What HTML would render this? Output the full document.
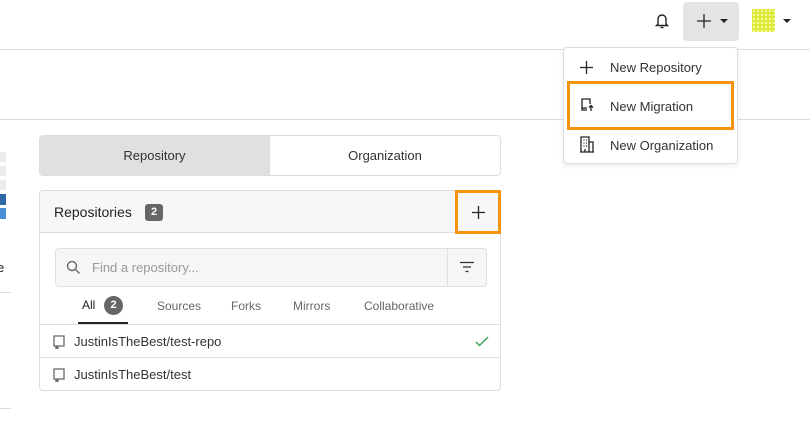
<!DOCTYPE html>
<html><head><style>
*{box-sizing:border-box;margin:0;padding:0}
body{width:810px;height:430px;background:#fff;font-family:"Liberation Sans",sans-serif;font-size:13px;color:#222;position:relative;overflow:hidden}
.a{position:absolute}
</style></head><body>
<div class="a" style="left:0;top:49px;width:810px;height:1px;background:#ddd"></div>
<div class="a" style="left:0;top:119px;width:810px;height:1px;background:#ddd"></div>
<div class="a" style="left:0;top:152px;width:6px;height:10px;background:#ebebeb"></div>
<div class="a" style="left:0;top:166px;width:6px;height:10px;background:#ebebeb"></div>
<div class="a" style="left:0;top:180px;width:6px;height:10px;background:#ebebeb"></div>
<div class="a" style="left:0;top:194px;width:6px;height:11px;background:#2f6aa8"></div>
<div class="a" style="left:0;top:208px;width:6px;height:11px;background:#4a8fd6"></div>
<div class="a" style="left:-3px;top:260px;font-size:13px">e</div>
<div class="a" style="left:0;top:292px;width:11px;height:1px;background:#ddd"></div>
<div class="a" style="left:0;top:408px;width:11px;height:1px;background:#ddd"></div>
<svg class="a" style="left:654px;top:12px" width="16" height="18" viewBox="0 0 16 18"><path d="M4 12V7a4 4 0 0 1 8 0v5l1.5 1.5h-11z" fill="none" stroke="#222" stroke-width="1.4"/><path d="M6.5 15.5h3" stroke="#222" stroke-width="1.4"/></svg>
<div class="a" style="left:683px;top:2px;width:56px;height:39px;background:#e4e4e4;border-radius:4px"></div>
<svg class="a" style="left:697px;top:14px" width="14" height="14" viewBox="0 0 14 14" stroke="#222" stroke-width="1.3"><path d="M7 0v14M0 7h14"/></svg>
<div class="a" style="left:720px;top:19px;border-left:4px solid transparent;border-right:4px solid transparent;border-top:4px solid #222"></div>
<div class="a" style="left:752px;top:9px;width:23px;height:23px;background:#dde832;background-image:radial-gradient(#f3f7a0 1px,transparent 1.5px);background-size:4px 4px"></div>
<div class="a" style="left:783px;top:19px;border-left:4px solid transparent;border-right:4px solid transparent;border-top:4px solid #222"></div>
<div class="a" style="left:563px;top:47px;width:175px;height:117px;background:#fff;border:1px solid #ddd;border-radius:4px;box-shadow:0 2px 6px rgba(0,0,0,.08)"></div>
<svg class="a" style="left:580px;top:61px" width="13" height="13" viewBox="0 0 13 13" stroke="#222" stroke-width="1.3"><path d="M6.5 0v13M0 6.5h13"/></svg>
<div class="a" style="left:610px;top:60px;color:#333">New Repository</div>
<div class="a" style="left:567px;top:81px;width:167px;height:49px;border:3px solid #f5940f"></div>
<svg class="a" style="left:579px;top:97px" width="16" height="16" viewBox="0 0 16 16" fill="none" stroke="#222" stroke-width="1.3"><path d="M8 13H3V2h8v5"/><path d="M3 11h5"/><path d="M12 14V8.5M10 10.5l2-2 2 2"/></svg>
<div class="a" style="left:610px;top:99px;color:#333">New Migration</div>
<svg class="a" style="left:579px;top:136px" width="16" height="17" viewBox="0 0 16 17" fill="none" stroke="#222" stroke-width="1.3"><path d="M2 16V1h8v15M10 6h4v10M1 16h14M4.5 4h1M7 4h1M4.5 7h1M7 7h1M4.5 10h1M7 10h1M6 16v-3"/></svg>
<div class="a" style="left:610px;top:138px;color:#333">New Organization</div>
<div class="a" style="left:39px;top:135px;width:462px;height:41px;border:1px solid #ddd;border-radius:4px;overflow:hidden">
<div class="a" style="left:0;top:0;width:230px;height:39px;background:#e0e0e0;border-right:1px solid #ddd;text-align:center;line-height:39px;color:#333">Repository</div>
<div class="a" style="left:230px;top:0;width:230px;height:39px;text-align:center;line-height:39px;color:#333">Organization</div>
</div>
<div class="a" style="left:39px;top:190px;width:462px;height:201px;border:1px solid #ddd;border-radius:4px;overflow:hidden">
<div class="a" style="left:0;top:0;width:460px;height:42px;background:#f7f7f7;border-bottom:1px solid #ddd"></div>
<div class="a" style="left:14px;top:13px;font-size:14px;color:#222">Repositories</div>
<div class="a" style="left:105px;top:13px;width:18px;height:17px;background:#666;color:#fff;font-size:11px;font-weight:bold;text-align:center;line-height:17px;border-radius:3px">2</div>
<div class="a" style="left:15px;top:57px;width:432px;height:39px;background:#f6f6f6;border:1px solid #e0e0e0;border-radius:4px"></div>
<div class="a" style="left:407px;top:58px;width:1px;height:37px;background:#e0e0e0"></div>
<svg class="a" style="left:26px;top:69px" width="15" height="15" viewBox="0 0 15 15" fill="none" stroke="#666" stroke-width="1.4"><circle cx="6" cy="6" r="4.5"/><path d="M9.5 9.5l4 4"/></svg>
<div class="a" style="left:52px;top:69px;color:#999">Find a repository...</div>
<svg class="a" style="left:419px;top:70px" width="16" height="12" viewBox="0 0 16 12" stroke="#333" stroke-width="1.3"><path d="M1 1.5h14M4 6h8M6.5 10.5h3"/></svg>
<div class="a" style="left:42px;top:107px;font-size:12px;color:#222">All</div>
<div class="a" style="left:64px;top:105px;width:19px;height:19px;background:#666;color:#fff;font-size:11px;font-weight:bold;text-align:center;line-height:19px;border-radius:50%">2</div>
<div class="a" style="left:38px;top:131px;width:50px;height:2px;background:#222"></div>
<div class="a" style="left:117px;top:108px;font-size:12px;color:#666">Sources</div>
<div class="a" style="left:191px;top:108px;font-size:12px;color:#666">Forks</div>
<div class="a" style="left:253px;top:108px;font-size:12px;color:#666">Mirrors</div>
<div class="a" style="left:324px;top:108px;font-size:12px;color:#666">Collaborative</div>
<div class="a" style="left:0;top:133px;width:460px;height:1px;background:#ddd"></div>
<div class="a" style="left:0;top:166px;width:460px;height:1px;background:#ddd"></div>
<svg class="a" style="left:12px;top:143px" width="14" height="15" viewBox="0 0 14 15" fill="none" stroke="#666" stroke-width="1.3"><path d="M2 12V2h10v10zM4 12v2.5l1-1 1 1V12"/></svg>
<div class="a" style="left:34px;top:143px;color:#333">JustinIsTheBest/test-repo</div>
<svg class="a" style="left:435px;top:145px" width="14" height="11" viewBox="0 0 14 11" fill="none" stroke="#3fa45a" stroke-width="1.5"><path d="M1 6l3.5 3.5L13 1"/></svg>
<svg class="a" style="left:12px;top:176px" width="14" height="15" viewBox="0 0 14 15" fill="none" stroke="#666" stroke-width="1.3"><path d="M2 12V2h10v10zM4 12v2.5l1-1 1 1V12"/></svg>
<div class="a" style="left:34px;top:176px;color:#333">JustinIsTheBest/test</div>
</div>
<div class="a" style="left:455px;top:190px;width:46px;height:44px;border:3px solid #f5940f;background:#f7f7f7"></div>
<svg class="a" style="left:472px;top:206px" width="13" height="13" viewBox="0 0 13 13" stroke="#222" stroke-width="1.3"><path d="M6.5 0v13M0 6.5h13"/></svg>
</body></html>
